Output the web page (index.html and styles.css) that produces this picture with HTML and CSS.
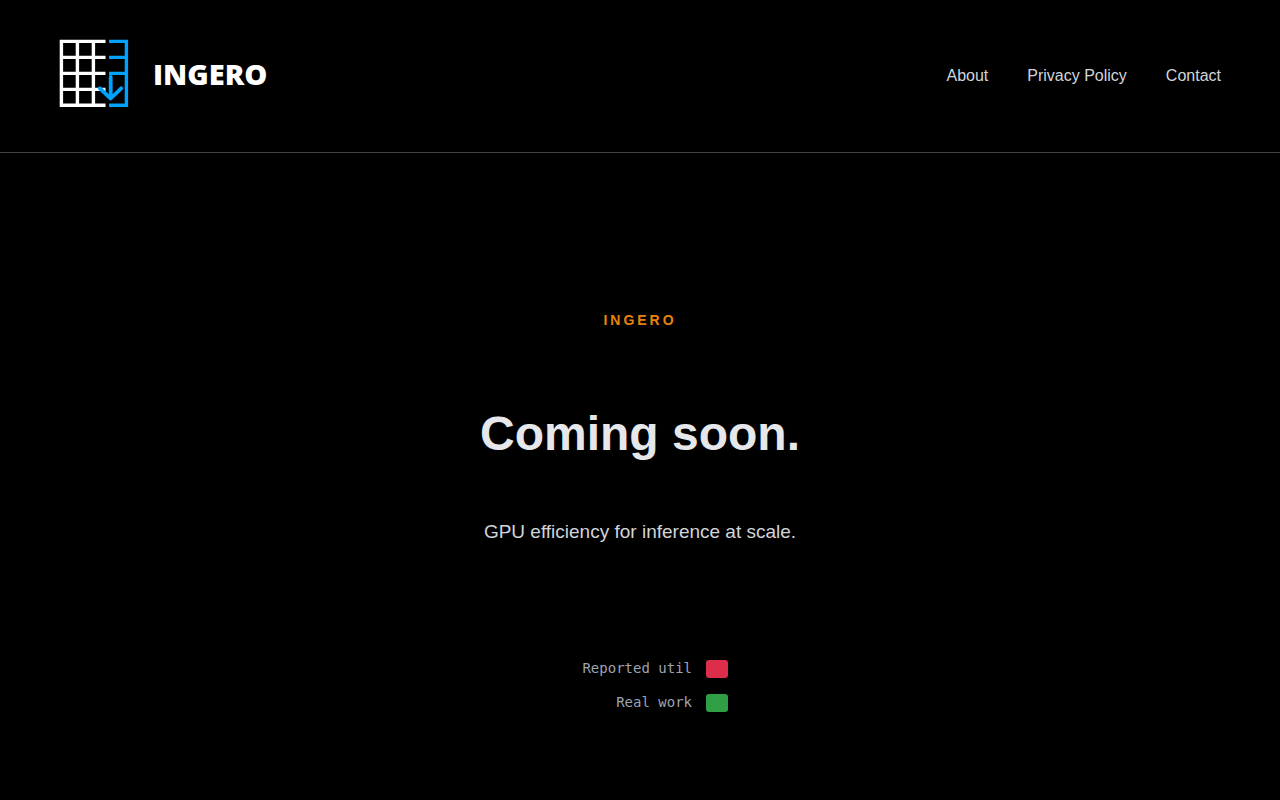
FILE: index.html
```html
<!DOCTYPE html>
<html lang="en">
<head>
<meta charset="utf-8">
<meta name="viewport" content="width=device-width, initial-scale=1">
<title>Ingero</title>
<link rel="stylesheet" href="styles.css">
</head>
<body>
<header class="site-header">
  <a class="brand" href="#">
    <svg class="brand-mark" viewBox="0 0 70 70" fill="none" aria-hidden="true">
      <path d="M46.5 2.4H2.4V66.3H46.5M2.4 18.4H46.5M2.4 34.4H46.5M2.4 50.4H46.5M18.4 2.4V66.3M34.4 2.4V66.3" stroke="#fff" stroke-width="3.4"/>
      <path d="M50 2.4H67.4V66.3H50M50 18.4H67.4M50 34.4H67.4" stroke="#00a2ff" stroke-width="3.4"/>
      <path d="M51.7 38V59M40.8 49.3L51.7 59.5L62.2 49.3" stroke="#00a2ff" stroke-width="3.8" stroke-linecap="round" stroke-linejoin="round"/>
    </svg>
    <span class="brand-name">INGERO</span>
  </a>
  <nav class="site-nav" aria-label="Main">
    <a href="#about">About</a>
    <a href="#privacy">Privacy Policy</a>
    <a href="#contact">Contact</a>
  </nav>
</header>
<main class="hero">
  <p class="eyebrow">INGERO</p>
  <h1 class="title">Coming soon.</h1>
  <p class="tagline">GPU efficiency for inference at scale.</p>
  <ul class="legend">
    <li class="legend-row"><span class="legend-label">Reported util</span><span class="swatch swatch-reported"></span></li>
    <li class="legend-row"><span class="legend-label">Real work</span><span class="swatch swatch-real"></span></li>
  </ul>
</main>
</body>
</html>
```
FILE: styles.css
```css
* { box-sizing: border-box; }
body {
  margin: 0;
  min-height: 100vh;
  display: flex;
  flex-direction: column;
  background: #000;
  color: #d1d5db;
  font: 16px/24px "Liberation Sans", Arial, sans-serif;
}
.site-header {
  display: flex;
  align-items: center;
  justify-content: space-between;
  padding: 39px 59px 43px;
  border-bottom: 1px solid #444;
}
.brand {
  display: flex;
  align-items: center;
  gap: 24px;
  color: #fff;
  text-decoration: none;
}
.brand-mark { width: 70px; height: 70px; }
.brand-name {
  font: 800 29px/36px "Open Sans", sans-serif;
}
.site-nav { display: flex; gap: 39px; padding-top: 4px; }
.site-nav a { color: #d1d5db; text-decoration: none; }
.hero {
  flex: 1;
  display: flex;
  flex-direction: column;
  align-items: center;
  padding: 155px 24px 80px;
  text-align: center;
}
.eyebrow {
  margin: 0 0 74px;
  color: #e8830c;
  font-size: 14px;
  font-weight: 700;
  letter-spacing: 3px;
}
.title {
  margin: 0 0 56px;
  color: #e5e7eb;
  font-size: 48px;
  line-height: 56px;
}
.tagline { margin: 0 0 114px; font-size: 19px; line-height: 28px; }
.legend {
  display: grid;
  gap: 16px;
  margin: 0;
  padding: 0;
  list-style: none;
  color: #9ca3af;
  font: 14px/16px "DejaVu Sans Mono", monospace;
}
.legend-row { display: flex; align-items: flex-start; gap: 14px; }
.legend-label { width: 140px; text-align: right; }
.swatch { width: 22px; height: 18px; border-radius: 3px; }
.swatch-reported { background: #dc2d4b; }
.swatch-real { background: #2f9e44; }
```
